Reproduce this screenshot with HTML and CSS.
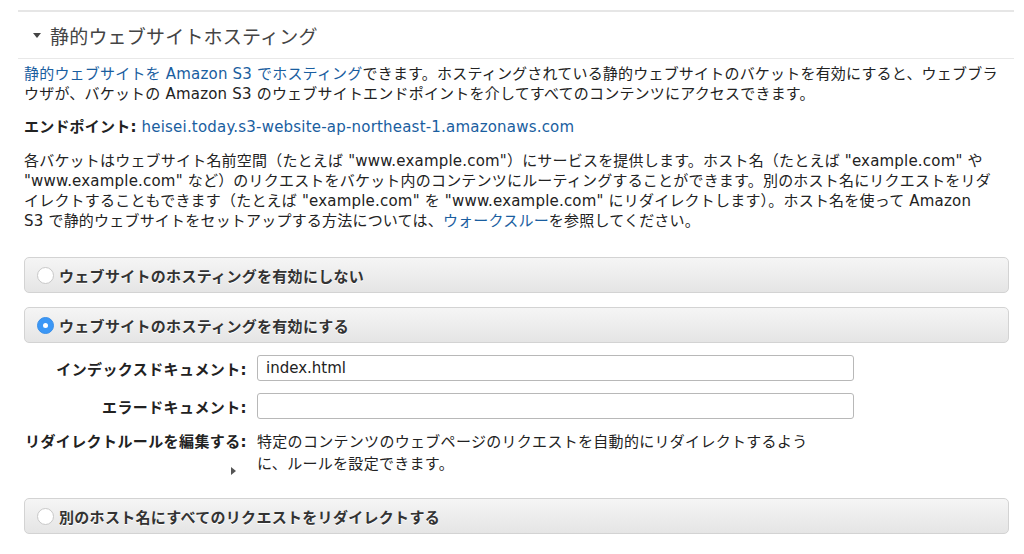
FILE: index.html
```html
<!DOCTYPE html>
<html lang="ja">
<head>
<meta charset="utf-8">
<link rel="stylesheet" href="styles.css">
</head>
<body>
<div class="page">
  <div class="section">
    <div class="section-head">
      <span class="caret"></span>
      <h2 class="title">静的ウェブサイトホスティング</h2>
    </div>
    <div class="content">
      <p class="intro"><a class="link" href="#">静的ウェブサイトを Amazon S3 でホスティング</a>できます。ホスティングされている静的ウェブサイトのバケットを有効にすると、ウェブブラ<br>ウザが、バケットの Amazon S3 のウェブサイトエンドポイントを介してすべてのコンテンツにアクセスできます。</p>
      <p class="endpoint"><b>エンドポイント:</b> <a class="link" href="#">heisei.today.s3-website-ap-northeast-1.amazonaws.com</a></p>
      <p class="desc">各バケットはウェブサイト名前空間（たとえば "www.example.com"）にサービスを提供します。ホスト名（たとえば "example.com" や<br>"www.example.com" など）のリクエストをバケット内のコンテンツにルーティングすることができます。別のホスト名にリクエストをリダ<br>イレクトすることもできます（たとえば "example.com" を "www.example.com" にリダイレクトします）。ホスト名を使って Amazon<br>S3 で静的ウェブサイトをセットアップする方法については、<a class="link" href="#">ウォークスルー</a>を参照してください。</p>

      <div class="options">
        <div class="option">
          <span class="radio"></span>
          <span class="option-label">ウェブサイトのホスティングを有効にしない</span>
        </div>
        <div class="option">
          <span class="radio checked"></span>
          <span class="option-label">ウェブサイトのホスティングを有効にする</span>
        </div>
        <div class="form">
          <div class="row">
            <label class="label">インデックスドキュメント:</label>
            <div class="input">index.html</div>
          </div>
          <div class="row">
            <label class="label">エラードキュメント:</label>
            <div class="input"></div>
          </div>
          <div class="row row-top">
            <div class="label label-col">
              <span>リダイレクトルールを編集する:</span>
              <span class="tri"></span>
            </div>
            <div class="help">特定のコンテンツのウェブページのリクエストを自動的にリダイレクトするよう<br>に、ルールを設定できます。</div>
          </div>
        </div>
        <div class="option">
          <span class="radio"></span>
          <span class="option-label">別のホスト名にすべてのリクエストをリダイレクトする</span>
        </div>
      </div>
    </div>
  </div>
</div>
</body>
</html>
```
FILE: styles.css
```css
* { box-sizing: border-box; }
html, body { margin: 0; padding: 0; background: #fff; }
body {
  font-family: "DejaVu Sans", "Noto Sans CJK JP", sans-serif;
  font-size: 15px;
  letter-spacing: 0.2px;
  color: #222;
  width: 1024px;
  height: 554px;
  overflow: hidden;
}
.page { padding: 10px 10px 0 18px; }
.section { border-top: 2px solid #e6e6e6; }
.section-head {
  display: flex;
  align-items: center;
  height: 47px;
  padding-left: 15px;
  border-bottom: 1px solid #e8e8e8;
}
.caret {
  width: 0; height: 0;
  border-left: 4px solid transparent;
  border-right: 4px solid transparent;
  border-top: 5px solid #444;
  margin-right: 9px;
  margin-top: 1px;
}
.title {
  margin: 0;
  font-family: "Noto Sans CJK JP", sans-serif;
  font-size: 19px;
  font-weight: normal;
  letter-spacing: 0.2px;
  color: #444;
}
.content { padding: 5px 5px 0 6px; }
p { margin: 0; line-height: 20px; white-space: nowrap; }
.link { color: #1a5e9f; text-decoration: none; }
.endpoint { margin-top: 13px; }
.endpoint b { color: #222; }
.desc { margin-top: 14px; }
.options { margin-top: 26px; display: flex; flex-direction: column; }
.option {
  display: flex;
  align-items: center;
  height: 36px;
  border: 1px solid #d3d3d3;
  border-radius: 5px;
  background: linear-gradient(#f5f5f5, #e5e5e5);
  padding-left: 12px;
  margin-bottom: 14px;
}
.radio {
  flex: none;
  width: 17px; height: 17px;
  border-radius: 50%;
  background: #fff;
  border: 1px solid #c8c8c8;
  margin-right: 5px;
  display: flex; align-items: center; justify-content: center;
}
.radio.checked {
  background: #3b97f6;
  border-color: #3a8fe8;
}
.radio.checked::after {
  content: "";
  width: 5px; height: 5px;
  border-radius: 50%;
  background: #fff;
}
.option-label {
  font-weight: bold;
  color: #333;
  letter-spacing: 0.3px;
  text-shadow: 0 1px 0 #fff;
}
.form { margin-top: -2px; margin-bottom: 23px; display: flex; flex-direction: column; }
.row { display: flex; align-items: center; margin-bottom: 12px; }
.row-top { align-items: flex-start; margin-top: 0; margin-bottom: 0; }
.label {
  flex: none;
  width: 233px;
  text-align: right;
  font-weight: bold;
  color: #222;
  letter-spacing: 0.4px;
  padding-right: 10px;
}
.label-col { display: flex; flex-direction: column; align-items: flex-end; line-height: 22px; }
.tri {
  width: 0; height: 0;
  border-top: 4px solid transparent;
  border-bottom: 4px solid transparent;
  border-left: 5px solid #555;
  margin-top: 14px;
  margin-right: 11px;
}
.input {
  width: 597px;
  height: 26px;
  border: 1px solid #b8b8b8;
  border-radius: 3px;
  padding: 0 8px;
  line-height: 24px;
  letter-spacing: 0;
  color: #222;
  background: #fff;
}
.help { line-height: 22px; color: #222; white-space: nowrap; letter-spacing: 0.3px; }
```
